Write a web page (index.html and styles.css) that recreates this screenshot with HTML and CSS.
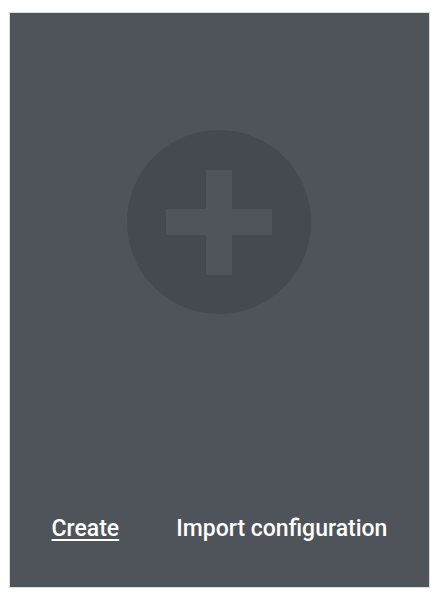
FILE: index.html
```html
<!DOCTYPE html>
<html lang="en">
<head>
<meta charset="utf-8">
<title>Create</title>
<link rel="stylesheet" href="styles.css">
</head>
<body>
<div class="page">
  <div class="card">
    <div class="icon-area">
      <div class="circle">
        <span class="bar bar-v"></span>
        <span class="bar bar-h"></span>
      </div>
    </div>
    <div class="actions">
      <a class="action action-create" href="#">Create</a>
      <a class="action action-import" href="#">Import configuration</a>
    </div>
  </div>
</div>
</body>
</html>
```

FILE: styles.css
```css
html, body {
  margin: 0;
  padding: 0;
  background: #ffffff;
}

.page {
  padding: 12px 0 0 9px;
}

.card {
  box-sizing: border-box;
  width: 421px;
  height: 576px;
  border: 1px solid #dcdcdc;
  background: #4f535a;
  display: flex;
  flex-direction: column;
  font-family: Roboto, "Liberation Sans", sans-serif;
}

.icon-area {
  padding-top: 117px;
  display: flex;
  justify-content: center;
}

.circle {
  width: 184px;
  height: 184px;
  border-radius: 50%;
  background: #454a51;
  display: grid;
  place-items: center;
  margin-left: -2px;
}

.bar {
  grid-area: 1 / 1;
  background: #50545b;
}

.bar-v {
  width: 26px;
  height: 105px;
}

.bar-h {
  width: 106px;
  height: 26px;
}

.actions {
  margin-top: auto;
  padding-bottom: 45px;
  display: flex;
  justify-content: center;
  gap: 57px;
}

.action {
  color: #ffffff;
  font-size: 23px;
  font-weight: 500;
  line-height: 26px;
  text-decoration: none;
}

.action-create {
  text-decoration: underline;
  text-underline-offset: 3px;
  text-decoration-thickness: 2px;
}
```
